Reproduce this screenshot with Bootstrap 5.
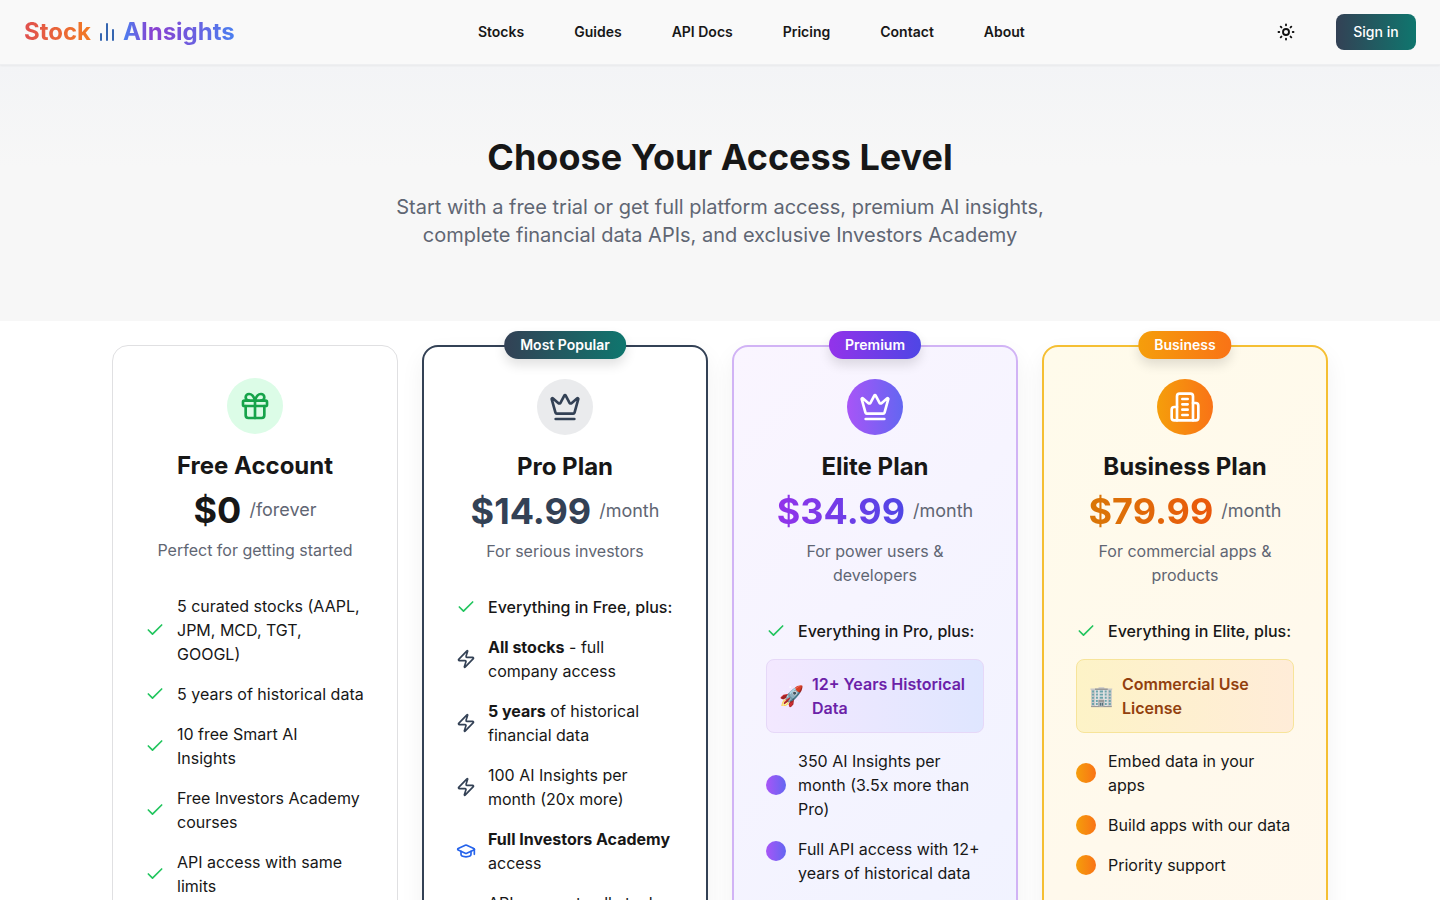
<!DOCTYPE html>
<html lang="en">
<head>
<meta charset="utf-8">
<meta name="viewport" content="width=device-width, initial-scale=1">
<title>Pricing - Stock AInsights</title>
<link href="https://cdn.jsdelivr.net/npm/bootstrap@5.3.0/dist/css/bootstrap.min.css" rel="stylesheet">
<style>
  :root {
    --ink: #171717;
    --slate: #334155;
    --teal: #0f766e;
    --soft: #5f6673;
  }
  body { font-family: Inter, sans-serif; color: var(--ink); background: #fff; }
  svg { fill: none; stroke: currentColor; stroke-width: 2; stroke-linecap: round; stroke-linejoin: round; flex-shrink: 0; }

  .site-bar { min-height: 65px; background: #f9f9f9; border-bottom: 1px solid #eeeff1; box-shadow: 0 1px 2px rgba(0,0,0,.05); position: relative; }
  .brand { font-size: 24px; line-height: 32px; font-weight: 700; color: #3565b0; }
  .grad-text { background-clip: text; -webkit-background-clip: text; color: transparent; }
  .grad-warm { background-image: linear-gradient(90deg, #e0504f, #f27a22); }
  .grad-cool { background-image: linear-gradient(90deg, #4a80f0, #8b3fd0 27%, #4a80f0); }
  .top-nav { gap: 50px; }
  .top-link { font-size: 14px; line-height: 20px; font-weight: 600; color: var(--ink); }
  .bar-actions { gap: 32px; }
  .icon-btn { width: 36px; height: 36px; color: #111; }
  .icon-btn svg { stroke-width: 2.5; }
  .sign-btn { min-width: 80px; font-size: 14px; line-height: 20px; font-weight: 500; color: #fff; background: linear-gradient(90deg, var(--slate), var(--teal)); border-radius: 8px; }
  .sign-btn:hover { color: #fff; }

  .hero { padding: 72px 24px; background: linear-gradient(#f3f4f6, #f7f7f7 40%); }
  .hero h1 { font-size: 36px; line-height: 40px; font-weight: 700; }
  .hero p { font-size: 20px; line-height: 28px; color: var(--soft); max-width: 672px; }

  .plans { max-width: 1280px; padding: 24px 32px; }
  .plan { border: 2px solid; border-radius: 16px; padding: 32px; height: 100%; position: relative; background: #fff; box-shadow: 0 10px 25px rgba(0,0,0,.06); }
  .plan-free { border: 1px solid #e0e0e2; box-shadow: none; }
  .plan-pro { border-color: var(--slate); }
  .plan-elite { border-color: #d1b3f5; background: linear-gradient(135deg, #faf5ff, #eef2ff 120%); }
  .plan-business { border-color: #f5bf33; background: linear-gradient(135deg, #fffbeb, #fff7ed 120%); }
  .plan-tag { position: absolute; top: -16px; left: 50%; transform: translateX(-50%); white-space: nowrap; padding: 4px 16px; border-radius: 14px; font-size: 14px; line-height: 20px; font-weight: 600; color: #fff; box-shadow: 0 6px 12px rgba(0,0,0,.12); }
  .tag-pro { background: linear-gradient(90deg, var(--slate), var(--teal)); }
  .tag-elite { background: linear-gradient(90deg, #9333ea, #4f46e5); }
  .tag-business { background: linear-gradient(90deg, #f59e0b, #f97316); }
  .plan-icon { width: 56px; height: 56px; margin-bottom: 16px; }
  .icon-free { background: #dcfce7; color: #16a34a; }
  .icon-pro { background: #eaebed; color: var(--slate); }
  .fill-elite { background: linear-gradient(90deg, #a855f7, #6366f1); color: #fff; }
  .fill-business { background: linear-gradient(90deg, #f59e0b, #f97316); color: #fff; }
  .plan h2 { font-size: 24px; line-height: 32px; font-weight: 700; margin-bottom: 8px; }
  .price { font-size: 36px; line-height: 40px; font-weight: 700; }
  .price-pro { color: var(--slate); }
  .price-elite { background-image: linear-gradient(90deg, #9333ea, #4f46e5); }
  .price-business { background-image: linear-gradient(90deg, #d97706, #ea580c); }
  .period { font-size: 18px; line-height: 28px; color: var(--soft); }
  .plan-note { line-height: 24px; color: var(--soft); margin-bottom: 32px; }
  .features { display: grid; gap: 16px; line-height: 24px; }
  .features li { display: flex; align-items: center; gap: 12px; }
  .features strong { font-weight: 700; }
  .features .intro { font-weight: 500; }
  .tick { color: #22c55e; }
  .bolt { color: var(--slate); }
  .cap { color: #2563eb; }
  .dot { width: 20px; height: 20px; flex-shrink: 0; }
  .features .perk { gap: 8px; padding: 12px; border: 1px solid; border-radius: 8px; font-weight: 600; }
  .features .perk-elite { background: linear-gradient(90deg, #f3e8ff, #dfe6ff); border-color: #e6d8f8; color: #6b21a8; }
  .features .perk-business { background: linear-gradient(90deg, #fdf3c7, #ffecd8); border-color: #f7e49a; color: #92400e; }
  .emoji { font-size: 20px; line-height: 28px; font-weight: 400; }
</style>
</head>
<body>
<svg class="d-none" aria-hidden="true">
  <symbol id="check" viewBox="0 0 24 24"><path d="M20 6 9 17l-5-5"/></symbol>
  <symbol id="zap" viewBox="0 0 24 24"><path d="M4 14a1 1 0 0 1-.78-1.63l9.9-10.2a.5.5 0 0 1 .86.46l-1.92 6.02A1 1 0 0 0 13 10h7a1 1 0 0 1 .78 1.63l-9.9 10.2a.5.5 0 0 1-.86-.46l1.92-6.02A1 1 0 0 0 11 14z"/></symbol>
  <symbol id="crown" viewBox="0 0 24 24"><path d="M11.562 3.266a.5.5 0 0 1 .876 0L15.39 8.87a1 1 0 0 0 1.516.294L21.183 5.5a.5.5 0 0 1 .798.519l-2.834 10.246a1 1 0 0 1-.956.734H5.81a1 1 0 0 1-.957-.734L2.02 6.02a.5.5 0 0 1 .798-.519l4.276 3.664a1 1 0 0 0 1.516-.294z"/><path d="M5 21h14"/></symbol>
</svg>

<header class="site-bar d-flex align-items-center justify-content-between px-4">
  <a href="#" class="brand d-flex align-items-center gap-1 text-decoration-none">
    <span class="grad-text grad-warm">Stock</span>
    <svg width="24" height="24" viewBox="0 0 24 24" aria-hidden="true"><path d="M18 20V10M12 20V4M6 20v-6"/></svg>
    <span class="grad-text grad-cool">AInsights</span>
  </a>
  <nav class="top-nav d-none d-md-flex">
    <a class="top-link text-decoration-none" href="#">Stocks</a>
    <a class="top-link text-decoration-none" href="#">Guides</a>
    <a class="top-link text-decoration-none" href="#">API Docs</a>
    <a class="top-link text-decoration-none" href="#">Pricing</a>
    <a class="top-link text-decoration-none" href="#">Contact</a>
    <a class="top-link text-decoration-none" href="#">About</a>
  </nav>
  <div class="bar-actions d-flex align-items-center">
    <button type="button" class="btn icon-btn p-0 border-0 d-flex align-items-center justify-content-center" aria-label="Toggle theme">
      <svg width="18" height="18" viewBox="0 0 24 24" aria-hidden="true"><circle cx="12" cy="12" r="4"/><path d="M12 2v1M12 21v1M4.93 4.93l1 1M18.07 18.07l1 1M2 12h1M21 12h1M5.93 18.07l-1 1M19.07 4.93l-1 1"/></svg>
    </button>
    <button type="button" class="btn sign-btn border-0 px-3 py-2">Sign in</button>
  </div>
</header>

<main>
  <section class="hero text-center">
    <h1 class="mb-3">Choose Your Access Level</h1>
    <p class="mx-auto mb-0">Start with a free trial or get full platform access, premium AI insights, complete financial data APIs, and exclusive Investors Academy</p>
  </section>

  <section class="plans container-fluid">
    <div class="row g-4">
      <div class="col-12 col-md-6 col-lg-3">
        <article class="plan plan-free">
          <div class="text-center">
            <div class="plan-icon icon-free rounded-circle d-flex align-items-center justify-content-center mx-auto">
              <svg width="32" height="32" viewBox="0 0 24 24" aria-hidden="true"><rect x="3" y="8" width="18" height="4" rx="1"/><path d="M12 8v13"/><path d="M19 12v7a2 2 0 0 1-2 2H7a2 2 0 0 1-2-2v-7"/><path d="M7.5 8a2.5 2.5 0 0 1 0-5A4.8 8 0 0 1 12 8a4.8 8 0 0 1 4.5-5 2.5 2.5 0 0 1 0 5"/></svg>
            </div>
            <h2>Free Account</h2>
            <div class="d-flex align-items-center justify-content-center gap-2 mb-2"><span class="price">$0</span><span class="period">/forever</span></div>
            <p class="plan-note">Perfect for getting started</p>
          </div>
          <ul class="features list-unstyled mb-0">
            <li><svg class="tick" width="20" height="20"><use href="#check"/></svg><span>5 curated stocks (AAPL, JPM, MCD, TGT, GOOGL)</span></li>
            <li><svg class="tick" width="20" height="20"><use href="#check"/></svg><span>5 years of historical data</span></li>
            <li><svg class="tick" width="20" height="20"><use href="#check"/></svg><span>10 free Smart AI<br>Insights</span></li>
            <li><svg class="tick" width="20" height="20"><use href="#check"/></svg><span>Free Investors Academy courses</span></li>
            <li><svg class="tick" width="20" height="20"><use href="#check"/></svg><span>API access with same limits</span></li>
          </ul>
        </article>
      </div>

      <div class="col-12 col-md-6 col-lg-3">
        <article class="plan plan-pro">
          <span class="plan-tag tag-pro">Most Popular</span>
          <div class="text-center">
            <div class="plan-icon icon-pro rounded-circle d-flex align-items-center justify-content-center mx-auto">
              <svg width="32" height="32" aria-hidden="true"><use href="#crown"/></svg>
            </div>
            <h2>Pro Plan</h2>
            <div class="d-flex align-items-center justify-content-center gap-2 mb-2"><span class="price price-pro">$14.99</span><span class="period">/month</span></div>
            <p class="plan-note">For serious investors</p>
          </div>
          <ul class="features list-unstyled mb-0">
            <li class="intro"><svg class="tick" width="20" height="20"><use href="#check"/></svg><span>Everything in Free, plus:</span></li>
            <li><svg class="bolt" width="20" height="20"><use href="#zap"/></svg><span><strong>All stocks</strong> - full company access</span></li>
            <li><svg class="bolt" width="20" height="20"><use href="#zap"/></svg><span><strong>5 years</strong> of historical financial data</span></li>
            <li><svg class="bolt" width="20" height="20"><use href="#zap"/></svg><span>100 AI Insights per month (20x more)</span></li>
            <li><svg class="cap" width="20" height="20" viewBox="0 0 24 24"><path d="M21.42 10.922a1 1 0 0 0-.019-1.838L12.83 5.18a2 2 0 0 0-1.66 0L2.6 9.08a1 1 0 0 0 0 1.832l8.57 3.908a2 2 0 0 0 1.66 0z"/><path d="M22 10v6"/><path d="M6 12.5V16a6 3 0 0 0 12 0v-3.5"/></svg><span><strong>Full Investors Academy</strong> access</span></li>
            <li><svg class="bolt" width="20" height="20"><use href="#zap"/></svg><span>API access to all stocks with 5 years of historical data</span></li>
          </ul>
        </article>
      </div>

      <div class="col-12 col-md-6 col-lg-3">
        <article class="plan plan-elite">
          <span class="plan-tag tag-elite">Premium</span>
          <div class="text-center">
            <div class="plan-icon fill-elite rounded-circle d-flex align-items-center justify-content-center mx-auto">
              <svg width="32" height="32" aria-hidden="true"><use href="#crown"/></svg>
            </div>
            <h2>Elite Plan</h2>
            <div class="d-flex align-items-center justify-content-center gap-2 mb-2"><span class="price grad-text price-elite">$34.99</span><span class="period">/month</span></div>
            <p class="plan-note">For power users &amp; developers</p>
          </div>
          <ul class="features list-unstyled mb-0">
            <li class="intro"><svg class="tick" width="20" height="20"><use href="#check"/></svg><span>Everything in Pro, plus:</span></li>
            <li class="perk perk-elite"><span class="emoji">🚀</span><span>12+ Years Historical Data</span></li>
            <li><span class="dot fill-elite rounded-circle"></span><span>350 AI Insights per month (3.5x more than Pro)</span></li>
            <li class="align-items-start"><span class="dot fill-elite rounded-circle mt-1"></span><span>Full API access with 12+ years of historical data</span></li>
          </ul>
        </article>
      </div>

      <div class="col-12 col-md-6 col-lg-3">
        <article class="plan plan-business">
          <span class="plan-tag tag-business">Business</span>
          <div class="text-center">
            <div class="plan-icon fill-business rounded-circle d-flex align-items-center justify-content-center mx-auto">
              <svg width="32" height="32" viewBox="0 0 24 24" aria-hidden="true"><path d="M6 22V4a2 2 0 0 1 2-2h8a2 2 0 0 1 2 2v18Z"/><path d="M6 12H4a2 2 0 0 0-2 2v6a2 2 0 0 0 2 2h2"/><path d="M18 9h2a2 2 0 0 1 2 2v9a2 2 0 0 1-2 2h-2"/><path d="M10 6h4M10 10h4M10 14h4M10 18h4"/></svg>
            </div>
            <h2>Business Plan</h2>
            <div class="d-flex align-items-center justify-content-center gap-2 mb-2"><span class="price grad-text price-business">$79.99</span><span class="period">/month</span></div>
            <p class="plan-note">For commercial apps &amp; products</p>
          </div>
          <ul class="features list-unstyled mb-0">
            <li class="intro"><svg class="tick" width="20" height="20"><use href="#check"/></svg><span>Everything in Elite, plus:</span></li>
            <li class="perk perk-business"><span class="emoji">🏢</span><span>Commercial Use License</span></li>
            <li><span class="dot fill-business rounded-circle"></span><span>Embed data in your apps</span></li>
            <li><span class="dot fill-business rounded-circle"></span><span>Build apps with our data</span></li>
            <li><span class="dot fill-business rounded-circle"></span><span>Priority support</span></li>
          </ul>
        </article>
      </div>
    </div>
  </section>
</main>
<script src="https://cdn.jsdelivr.net/npm/bootstrap@5.3.0/dist/js/bootstrap.bundle.min.js"></script>
</body>
</html>
